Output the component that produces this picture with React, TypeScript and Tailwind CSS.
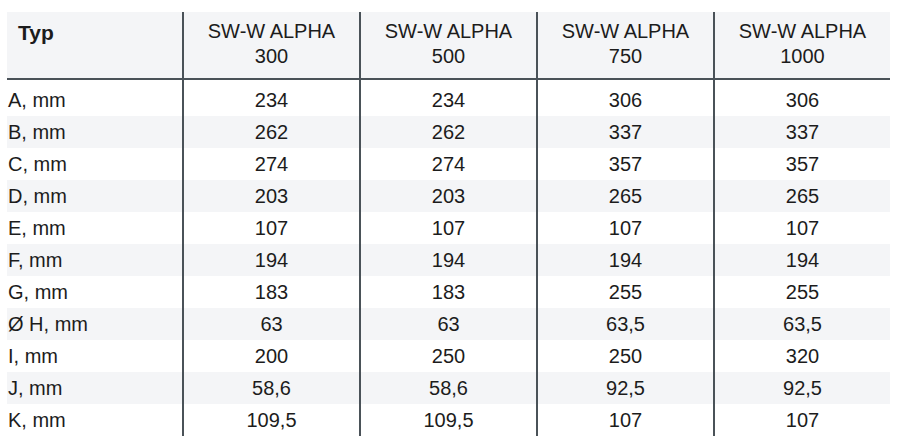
const models = ["300", "500", "750", "1000"];

const rows: { label: string; values: string[] }[] = [
  { label: "A, mm", values: ["234", "234", "306", "306"] },
  { label: "B, mm", values: ["262", "262", "337", "337"] },
  { label: "C, mm", values: ["274", "274", "357", "357"] },
  { label: "D, mm", values: ["203", "203", "265", "265"] },
  { label: "E, mm", values: ["107", "107", "107", "107"] },
  { label: "F, mm", values: ["194", "194", "194", "194"] },
  { label: "G, mm", values: ["183", "183", "255", "255"] },
  { label: "Ø H, mm", values: ["63", "63", "63,5", "63,5"] },
  { label: "I, mm", values: ["200", "250", "250", "320"] },
  { label: "J, mm", values: ["58,6", "58,6", "92,5", "92,5"] },
  { label: "K, mm", values: ["109,5", "109,5", "107", "107"] },
];

function Row({ label, values, index }: { label: string; values: string[]; index: number }) {
  const shaded = index % 2 === 1;
  const first = index === 0;
  return (
    <div className="grid grid-cols-[175px_177px_177px_177px_177px]">
      <div className={`${first ? "h-[36px] pt-1" : "h-[32px]"} flex items-center`}>
        <div className={`h-[32px] w-full flex items-center pl-px ${shaded ? "bg-[#f4f5f7]" : ""}`}>
          {label}
        </div>
      </div>
      {values.map((v, i) => (
        <div
          key={i}
          className={`${first ? "h-[36px] pt-1" : "h-[32px]"} border-l-2 border-[#4a5258]`}
        >
          <div className={`h-[32px] flex items-center justify-center ${shaded ? "bg-[#f4f5f7]" : ""}`}>
            {v}
          </div>
        </div>
      ))}
    </div>
  );
}

export default function App() {
  return (
    <main
      className="w-[900px] h-[442px] bg-white pt-3 pl-[7px] text-[20px] text-[#1c1c1c]"
      style={{ fontFamily: '"Liberation Sans", Arial, sans-serif' }}
    >
      <div className="w-[883px]">
        <div className="grid grid-cols-[175px_177px_177px_177px_177px] bg-[#f4f5f7] border-b-2 border-[#4a5258] h-[68px]">
          <div className="pl-[11px] pt-[8px] text-[21px] font-bold leading-[25px]">Typ</div>
          {models.map((m) => (
            <div
              key={m}
              className="border-l-2 border-[#4a5258] pt-[7px] text-center leading-[25px]"
            >
              <p>SW-W ALPHA</p>
              <p>{m}</p>
            </div>
          ))}
        </div>
        {rows.map((r, i) => (
          <Row key={r.label} label={r.label} values={r.values} index={i} />
        ))}
      </div>
    </main>
  );
}
